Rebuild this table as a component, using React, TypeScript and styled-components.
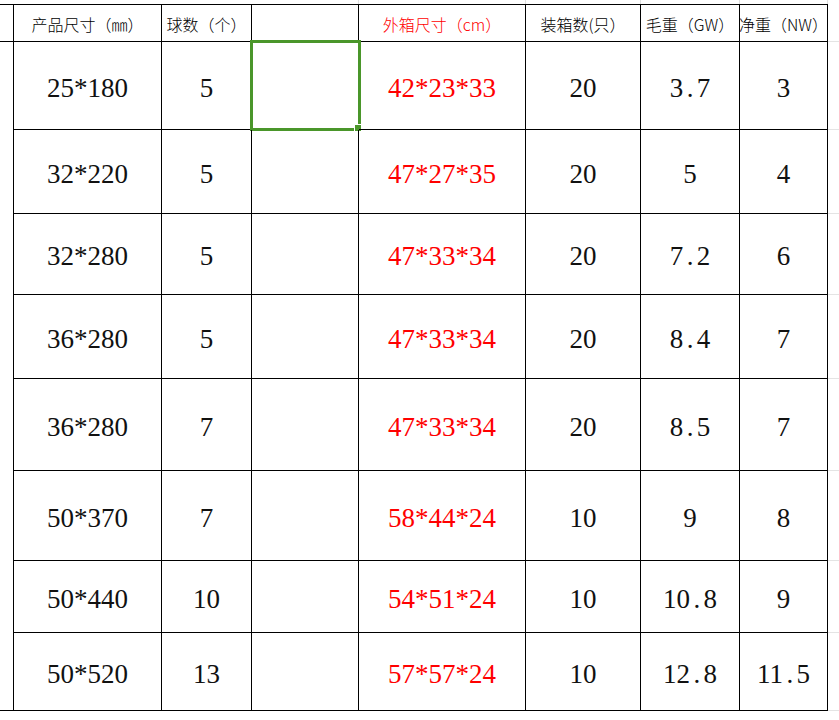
import { Fragment } from 'react'
import styled, { createGlobalStyle } from 'styled-components'

const GlobalStyle = createGlobalStyle`
  html, body {
    margin: 0;
    padding: 0;
    background: #ffffff;
  }
`

const Sheet = styled.div`
  display: grid;
  grid-template-columns: 14px 148px 90px 107px 167px 115px 99px 88px 11px;
  grid-template-rows: 4px 38px 88px 84px 81px 84px 92px 90px 72px 78px;
  width: 839px;
  background: #ffffff;
`

const MarginCell = styled.div<{ $line?: boolean }>`
  box-sizing: border-box;
  border-right: 1px solid ${p => (p.$line ? '#dedede' : 'transparent')};
`

const RowHead = styled.div<{ $top?: boolean; $bottom?: boolean }>`
  box-sizing: border-box;
  border-right: 1px solid #000;
  border-top: ${p => (p.$top ? '1px solid #000' : 'none')};
  border-bottom: ${p => (p.$bottom ? '1px solid #000' : 'none')};
`

const HeadCell = styled.div<{ $red?: boolean }>`
  box-sizing: border-box;
  display: flex;
  align-items: center;
  justify-content: center;
  padding-top: 1px;
  border-top: 1px solid #000;
  border-right: 1px solid #000;
  border-bottom: 1px solid #000;
  font-family: "Noto Sans CJK SC", "Noto Sans", sans-serif;
  font-size: 16px;
  font-weight: 300;
  white-space: nowrap;
  color: ${p => (p.$red ? '#ff0000' : '#000')};
`

const DataCell = styled.div<{ $red?: boolean }>`
  position: relative;
  box-sizing: border-box;
  display: flex;
  align-items: center;
  justify-content: center;
  padding-top: 5px;
  border-right: 1px solid #000;
  border-bottom: 1px solid #000;
  font-family: "Liberation Serif", "Times New Roman", serif;
  font-size: 27px;
  white-space: nowrap;
  color: ${p => (p.$red ? '#ff0000' : '#111')};
`

const EdgeCell = styled.div`
  box-sizing: border-box;
  border-bottom: 1px solid #e4e4e4;
`

const Dot = styled.span`
  display: inline-block;
  width: 0.5em;
  text-align: center;
`

const Selection = styled.div`
  position: absolute;
  top: -2px;
  left: -2px;
  width: 111px;
  height: 91px;
  box-sizing: border-box;
  border: 3px solid #4a962a;
  pointer-events: none;
`

const FillHandle = styled.div`
  position: absolute;
  right: -3px;
  bottom: -3px;
  width: 6px;
  height: 6px;
  background: #4a962a;
  outline: 1px solid #ffffff;
`

const headers = [
  { label: '产品尺寸（㎜）' },
  { label: '球数（个）' },
  { label: '' },
  { label: '外箱尺寸（cm）', red: true },
  { label: '装箱数(只）' },
  { label: '毛重（GW）' },
  { label: '净重（NW）' },
]

const rows = [
  ['25*180', '5', '', '42*23*33', '20', '3.7', '3'],
  ['32*220', '5', '', '47*27*35', '20', '5', '4'],
  ['32*280', '5', '', '47*33*34', '20', '7.2', '6'],
  ['36*280', '5', '', '47*33*34', '20', '8.4', '7'],
  ['36*280', '7', '', '47*33*34', '20', '8.5', '7'],
  ['50*370', '7', '', '58*44*24', '10', '9', '8'],
  ['50*440', '10', '', '54*51*24', '10', '10.8', '9'],
  ['50*520', '13', '', '57*57*24', '10', '12.8', '11.5'],
]

// sheet gridlines peeking above the table
const marginLines = [false, false, false, true, true, true, true, true, false]

// SimSun-style half-width period: give the dot a full digit slot
function Num({ value }: { value: string }) {
  const parts = value.split('.')
  return (
    <>
      {parts.map((part, i) => (
        <Fragment key={i}>
          {i > 0 && <Dot>.</Dot>}
          {part}
        </Fragment>
      ))}
    </>
  )
}

function App() {
  return (
    <>
      <GlobalStyle />
      <Sheet>
        {marginLines.map((line, i) => (
          <MarginCell key={`m${i}`} $line={line} />
        ))}

        <RowHead $top $bottom />
        {headers.map((h, i) => (
          <HeadCell key={`h${i}`} $red={h.red}>
            {h.label}
          </HeadCell>
        ))}
        <EdgeCell />

        {rows.map((row, r) => (
          <Fragment key={`r${r}`}>
            <RowHead $bottom={r === rows.length - 1} />
            {row.map((value, c) => (
              <DataCell key={c} $red={c === 3}>
                <Num value={value} />
                {r === 0 && c === 2 && (
                  <Selection>
                    <FillHandle />
                  </Selection>
                )}
              </DataCell>
            ))}
            <EdgeCell />
          </Fragment>
        ))}
      </Sheet>
    </>
  )
}

export default App
